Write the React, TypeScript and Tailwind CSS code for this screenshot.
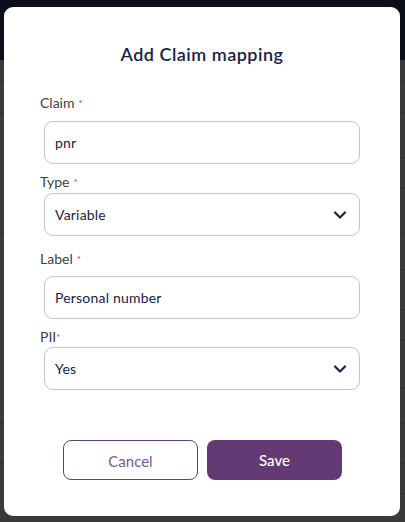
import { ChevronDown } from 'lucide-react';

const font = { fontFamily: 'Lato, "Noto Sans", sans-serif' };

function Label({ text, tight }: { text: string; tight?: boolean }) {
  return (
    <div className="text-[14px] leading-[18px] text-[#3f3f46]">
      {text}
      <span className={`text-[10px] align-top text-[#e0403f] ${tight ? '' : 'ml-1'}`}>*</span>
    </div>
  );
}

function Field({ value, select }: { value: string; select?: boolean }) {
  return (
    <div className="ml-1 flex h-[43px] items-center justify-between rounded-[9px] border border-[#c4c3cc] bg-white pl-[10px] pr-[9px] text-[14px] tracking-[0.2px] text-[#1c2146]">
      <span>{value}</span>
      {select ? <ChevronDown size={20} strokeWidth={2.6} className="text-[#1c2146]" /> : null}
    </div>
  );
}

export default function App() {
  return (
    <div className="relative h-[522px] w-[405px] overflow-hidden bg-[#3a3a3a]" style={font}>
      {/* dimmed page behind */}
      <div className="h-[60px] bg-[#0c0f1a]" />
      <div className="flex flex-col">
        {[22, 31, 45, 30, 46, 36, 40, 30, 48, 36, 40, 30, 34].map((h, i) => (
          <div key={i} className="border-b border-[#333333]" style={{ height: h }} />
        ))}
      </div>

      <div className="absolute left-[4px] top-[7px] flex h-[509px] w-[396px] flex-col rounded-[9px] bg-white pl-[36px] pr-[40px]">
        <h2 className="mt-[34px] pl-[4px] text-center text-[18px] font-semibold tracking-[0.5px] text-[#1c2146]">
          Add Claim mapping
        </h2>

        <div className="mt-[26px]">
          <Label text="Claim" />
          <div className="mt-[9px]">
            <Field value="pnr" />
          </div>
        </div>

        <div className="mt-[9px]">
          <Label text="Type" />
          <div className="mt-[2px]">
            <Field value="Variable" select />
          </div>
        </div>

        <div className="mt-[14px]">
          <Label text="Label" />
          <div className="mt-[8px]">
            <Field value="Personal number" />
          </div>
        </div>

        <div className="mt-[9px]">
          <Label text="PII" tight />
          <div className="mt-[1px]">
            <Field value="Yes" select />
          </div>
        </div>

        <div className="mt-[50px] flex justify-center gap-[9px] pl-[5px]">
          <button className="h-[40px] w-[135px] rounded-[8px] border border-[#6a3f7a] bg-white pt-[2px] text-[15px] text-[#7b5a8c]">
            Cancel
          </button>
          <button className="h-[40px] w-[135px] rounded-[8px] bg-[#643a75] pt-[1px] text-[15px] font-medium text-white">
            Save
          </button>
        </div>
      </div>
    </div>
  );
}
